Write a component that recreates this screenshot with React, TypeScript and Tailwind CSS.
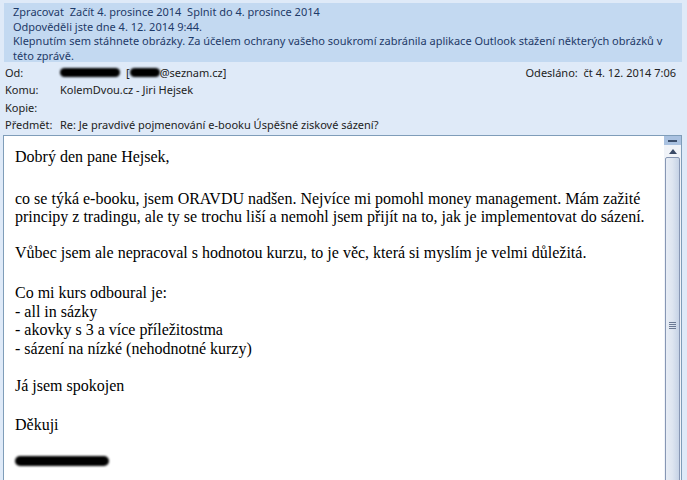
const Blot = ({ w, h = 9 }: { w: number; h?: number }) => (
  <span
    className="inline-block bg-black rounded-full blur-[1px] align-middle"
    style={{ width: w, height: h }}
  />
);

const HeaderRow = ({ label, children }: { label: string; children?: React.ReactNode }) => (
  <div className="flex h-[17.5px] items-center">
    <span className="w-[55px] shrink-0">{label}</span>
    <span className="flex-1 flex items-center">{children}</span>
  </div>
);

const App = () => {
  return (
    <div className="w-[687px] h-[480px] overflow-hidden bg-[#dfeaf8] pt-[3px] font-['Noto_Sans',sans-serif]">
      <div className="ml-[4px] mr-[5px] h-[59px] bg-[#c3d9f1] pl-[9px] pr-[6px] pt-[2px] text-[11px] leading-[14.5px] text-[#1e3a68]">
        <div>Zpracovat&nbsp; Začít 4. prosince 2014&nbsp; Splnit do 4. prosince 2014</div>
        <div>Odpověděli jste dne 4. 12. 2014 9:44.</div>
        <div>
          Klepnutím sem stáhnete obrázky. Za účelem ochrany vašeho soukromí zabránila aplikace Outlook stažení některých obrázků v této zprávě.
        </div>
      </div>

      <div className="px-[5px] pt-[2px] text-[11px] text-[#222]">
        <div className="flex">
          <div className="flex-1">
            <HeaderRow label="Od:">
              <Blot w={60} />
              <span className="ml-[6px]">[</span>
              <Blot w={30} />
              <span>@seznam.cz]</span>
            </HeaderRow>
          </div>
          <div className="flex h-[17.5px] items-center pr-[6px]">
            <span className="w-[58px]">Odesláno:</span>
            <span>čt 4. 12. 2014 7:06</span>
          </div>
        </div>
        <HeaderRow label="Komu:">KolemDvou.cz - Jiri Hejsek</HeaderRow>
        <HeaderRow label="Kopie:" />
        <HeaderRow label="Předmět:">Re: Je pravdivé pojmenování e-booku Úspěšné ziskové sázení?</HeaderRow>
      </div>

      <div className="ml-[3px] mr-[5px] mt-[1px] h-[360px] flex border border-[#7f9db9] bg-white">
        <div className="flex-1 pl-[11px] pt-[12px] font-['Liberation_Serif',serif] text-[16px] leading-[18.5px] text-black">
          <p>Dobrý den pane Hejsek,</p>
          <p className="mt-[23px]">
            co se týká e-booku, jsem ORAVDU nadšen. Nejvíce mi pomohl money management. Mám zažité principy z tradingu, ale ty se trochu liší a nemohl jsem přijít na to, jak je implementovat do sázení.
          </p>
          <p className="mt-[17px]">Vůbec jsem ale nepracoval s hodnotou kurzu, to je věc, která si myslím je velmi důležitá.</p>
          <p className="mt-[22px]">Co mi kurs odboural je:</p>
          <p>- all in sázky</p>
          <p>- akovky s 3 a více příležitostma</p>
          <p>- sázení na nízké (nehodnotné kurzy)</p>
          <p className="mt-[19px]">Já jsem spokojen</p>
          <p className="mt-[20px]">Děkuji</p>
          <p className="mt-[17px]">
            <Blot w={94} h={10} />
          </p>
        </div>
        <div className="w-[17px] flex flex-col bg-[#f0f3f8]">
          <div className="h-[9px] bg-[#a9c1e0] flex items-center justify-center">
            <span className="w-[9px] h-[2px] bg-[#3c4f6c]" />
          </div>
          <div className="h-[12px] flex items-center justify-center">
            <svg width="8" height="5" viewBox="0 0 8 5">
              <path d="M0 5 L4 0 L8 5 Z" fill="#3a4a66" />
            </svg>
          </div>
          <div className="flex-1 mx-[1px] rounded-[2px] border border-[#8797b4] bg-gradient-to-r from-[#e8edf5] via-[#dde5f0] to-[#c6d3e6] flex items-center justify-center">
            <div className="flex flex-col gap-[1px]">
              <span className="w-[7px] h-[1px] bg-[#6b7a94]" />
              <span className="w-[7px] h-[1px] bg-[#6b7a94]" />
              <span className="w-[7px] h-[1px] bg-[#6b7a94]" />
              <span className="w-[7px] h-[1px] bg-[#6b7a94]" />
            </div>
          </div>
        </div>
      </div>
    </div>
  );
};

export default App;
